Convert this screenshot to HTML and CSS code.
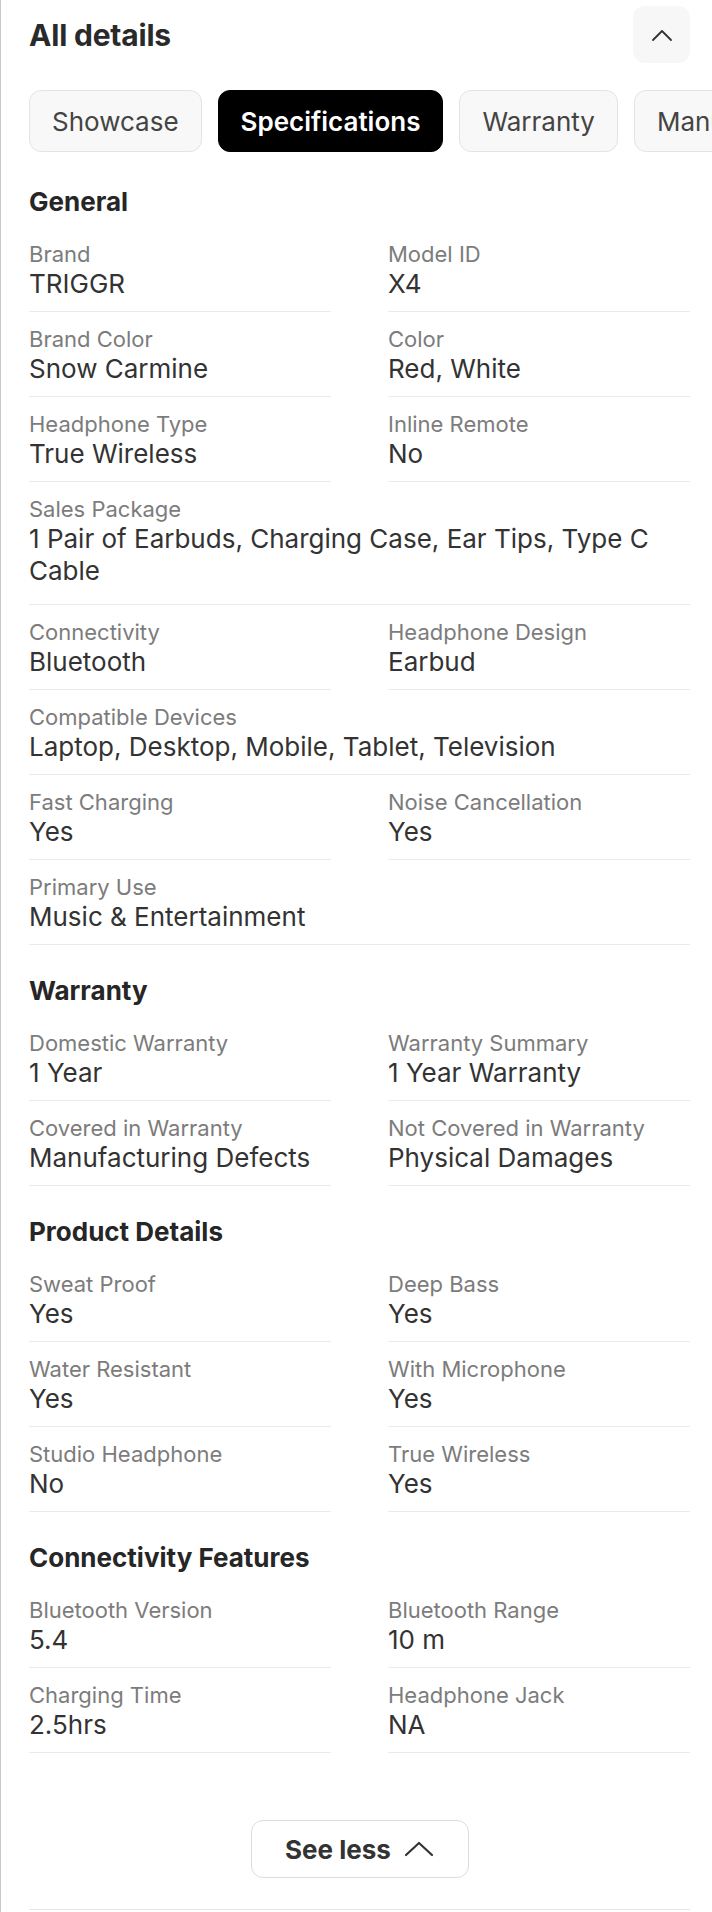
FILE: index.html
```html
<!DOCTYPE html>
<html>
<head>
<meta charset="utf-8">
<link rel="stylesheet" href="styles.css">
</head>
<body>
<div class="page">
  <div class="header">
    <h1 class="title">All details</h1>
    <button class="collapse-btn" aria-label="Collapse">
      <svg width="22" height="14" viewBox="0 0 22 14"><path d="M2 12 L11 3 L20 12" fill="none" stroke="#333" stroke-width="1.8" stroke-linecap="round" stroke-linejoin="round"/></svg>
    </button>
  </div>

  <div class="tabs">
    <span class="tab">Showcase</span>
    <span class="tab active">Specifications</span>
    <span class="tab">Warranty</span>
    <span class="tab">Manufacturer info</span>
  </div>

  <section class="section">
    <h2 class="section-title">General</h2>
    <div class="grid">
      <div class="item"><div class="label">Brand</div><div class="value">TRIGGR</div></div>
      <div class="item"><div class="label">Model ID</div><div class="value">X4</div></div>
      <div class="item"><div class="label">Brand Color</div><div class="value">Snow Carmine</div></div>
      <div class="item"><div class="label">Color</div><div class="value">Red, White</div></div>
      <div class="item"><div class="label">Headphone Type</div><div class="value">True Wireless</div></div>
      <div class="item"><div class="label">Inline Remote</div><div class="value">No</div></div>
      <div class="item full wrap"><div class="label">Sales Package</div><div class="value">1 Pair of Earbuds, Charging Case, Ear Tips, Type C Cable</div></div>
      <div class="item"><div class="label">Connectivity</div><div class="value">Bluetooth</div></div>
      <div class="item"><div class="label">Headphone Design</div><div class="value">Earbud</div></div>
      <div class="item full"><div class="label">Compatible Devices</div><div class="value">Laptop, Desktop, Mobile, Tablet, Television</div></div>
      <div class="item"><div class="label">Fast Charging</div><div class="value">Yes</div></div>
      <div class="item"><div class="label">Noise Cancellation</div><div class="value">Yes</div></div>
      <div class="item full"><div class="label">Primary Use</div><div class="value">Music &amp; Entertainment</div></div>
    </div>
  </section>

  <section class="section">
    <h2 class="section-title">Warranty</h2>
    <div class="grid">
      <div class="item"><div class="label">Domestic Warranty</div><div class="value">1 Year</div></div>
      <div class="item"><div class="label">Warranty Summary</div><div class="value">1 Year Warranty</div></div>
      <div class="item"><div class="label">Covered in Warranty</div><div class="value">Manufacturing Defects</div></div>
      <div class="item"><div class="label">Not Covered in Warranty</div><div class="value">Physical Damages</div></div>
    </div>
  </section>

  <section class="section">
    <h2 class="section-title">Product Details</h2>
    <div class="grid">
      <div class="item"><div class="label">Sweat Proof</div><div class="value">Yes</div></div>
      <div class="item"><div class="label">Deep Bass</div><div class="value">Yes</div></div>
      <div class="item"><div class="label">Water Resistant</div><div class="value">Yes</div></div>
      <div class="item"><div class="label">With Microphone</div><div class="value">Yes</div></div>
      <div class="item"><div class="label">Studio Headphone</div><div class="value">No</div></div>
      <div class="item"><div class="label">True Wireless</div><div class="value">Yes</div></div>
    </div>
  </section>

  <section class="section">
    <h2 class="section-title">Connectivity Features</h2>
    <div class="grid">
      <div class="item"><div class="label">Bluetooth Version</div><div class="value">5.4</div></div>
      <div class="item"><div class="label">Bluetooth Range</div><div class="value">10 m</div></div>
      <div class="item"><div class="label">Charging Time</div><div class="value">2.5hrs</div></div>
      <div class="item"><div class="label">Headphone Jack</div><div class="value">NA</div></div>
    </div>
  </section>

  <div class="footer">
    <button class="see-less">See less
      <svg width="30" height="16" viewBox="0 0 30 16"><path d="M2 14 L15 2 L28 14" fill="none" stroke="#333" stroke-width="2.2" stroke-linecap="round" stroke-linejoin="round"/></svg>
    </button>
  </div>
  <div class="bottom-rule"></div>
</div>
</body>
</html>
```

FILE: styles.css
```css
* { box-sizing: border-box; }

html, body {
  margin: 0;
  padding: 0;
  background: #fff;
}

body {
  font-family: Inter, "Noto Sans", sans-serif;
  color: #333;
}

.page {
  border-left: 1px solid #c9c9c9;
  padding: 6px 22px 3px 28px;
  min-height: 1912px;
  overflow: hidden;
}

.header {
  display: flex;
  justify-content: space-between;
  align-items: center;
  height: 57px;
}

.title {
  margin: 0;
  font-size: 30px;
  font-weight: 700;
  color: #2a2a2a;
  letter-spacing: -0.2px;
}

.collapse-btn {
  width: 57px;
  height: 57px;
  border: none;
  border-radius: 12px;
  background: #f7f7f7;
  display: flex;
  align-items: center;
  justify-content: center;
  padding: 0;
}

.tabs {
  margin-top: 27px;
  margin-right: -22px;
  display: flex;
  gap: 16px;
  overflow: hidden;
  white-space: nowrap;
}

.tab {
  flex: none;
  height: 62px;
  padding: 0 22px;
  display: flex;
  align-items: center;
  border: 1px solid #e4e4e4;
  border-radius: 12px;
  background: #f8f8f8;
  font-size: 26px;
  color: #444;
}

.tab.active {
  background: #000;
  border-color: #000;
  color: #fff;
  font-weight: 600;
}

.section {
  margin-top: 30px;
}

.tabs + .section {
  margin-top: 34px;
}

.section-title {
  margin: 0 0 22px;
  font-size: 26px;
  line-height: 32px;
  font-weight: 700;
  color: #262626;
}

.grid {
  display: grid;
  grid-template-columns: 1fr 1fr;
  column-gap: 57px;
  row-gap: 13px;
}

.item {
  padding-bottom: 11px;
  border-bottom: 1px solid #ebebeb;
}

.item.full {
  grid-column: 1 / -1;
}

.item.wrap {
  padding-bottom: 17px;
}

.label {
  font-size: 22px;
  line-height: 28px;
  color: #7c7c7c;
}

.value {
  font-size: 26px;
  line-height: 32px;
  color: #333;
}

.footer {
  display: flex;
  justify-content: center;
  margin-top: 67px;
}

.see-less {
  width: 218px;
  height: 58px;
  border: 1px solid #dcdcdc;
  border-radius: 12px;
  background: #fff;
  display: flex;
  align-items: center;
  justify-content: center;
  gap: 13px;
  font-family: Inter, "Noto Sans", sans-serif;
  font-size: 26px;
  font-weight: 700;
  color: #333;
  padding: 0;
}

.bottom-rule {
  margin-top: 31px;
  border-top: 1px solid #e6e6e6;
}
```
